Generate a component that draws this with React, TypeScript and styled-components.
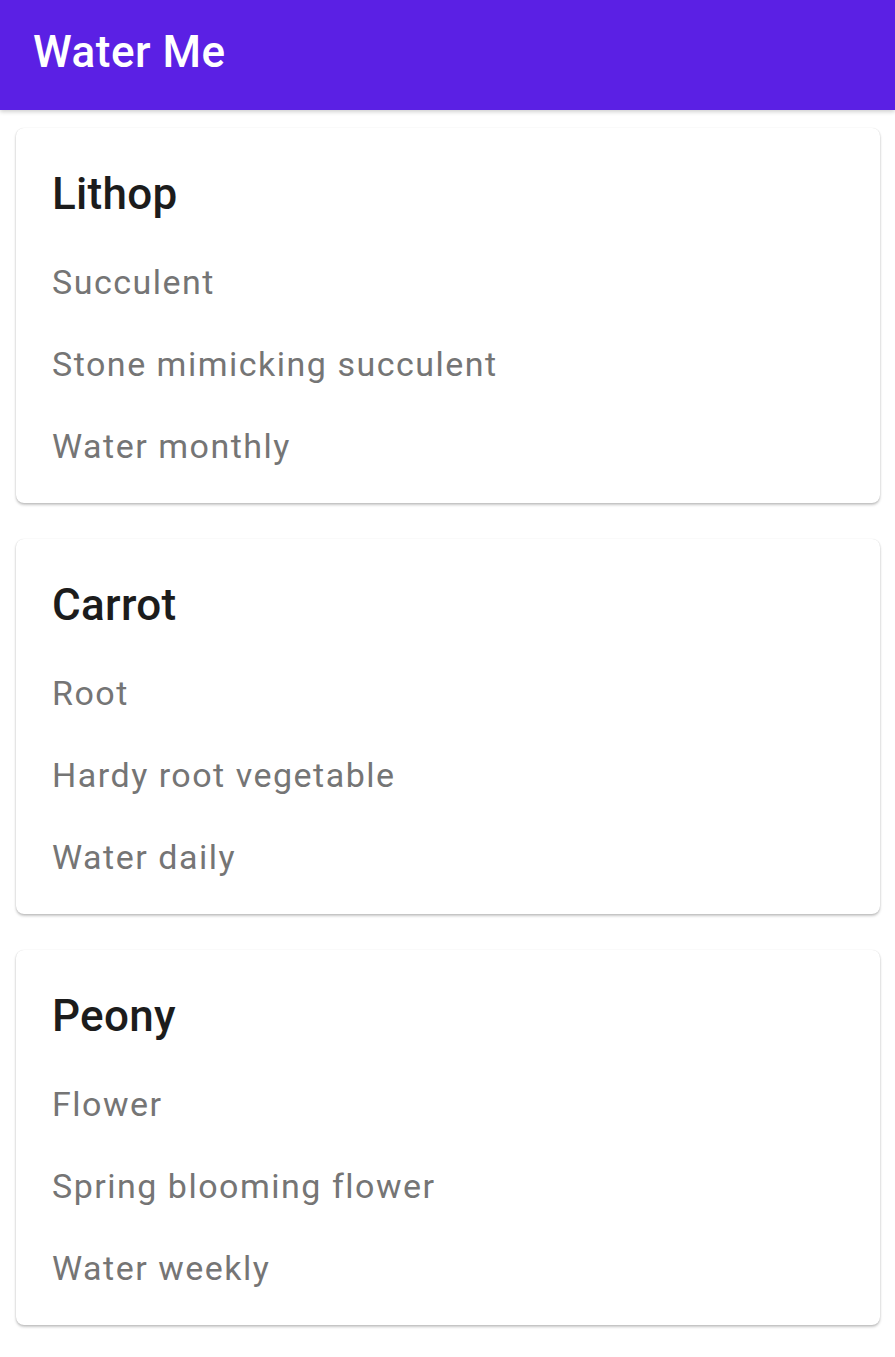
import React from "react";
import styled, { createGlobalStyle } from "styled-components";

const GlobalStyle = createGlobalStyle`
  html, body {
    margin: 0;
    padding: 0;
    background: #ffffff;
    font-family: Roboto, "Liberation Sans", sans-serif;
  }
`;

const Page = styled.div`
  display: flex;
  flex-direction: column;
  min-height: 1357px;
  background: #ffffff;
`;

const AppBar = styled.header`
  height: 110px;
  box-sizing: border-box;
  padding: 26px 33px 0;
  background: #5b20e4;
  box-shadow: 0 2px 4px rgba(0, 0, 0, 0.18);
  position: relative;
  z-index: 1;
`;

const AppTitle = styled.h1`
  margin: 0;
  font-size: 44px;
  line-height: 52px;
  font-weight: 500;
  color: #ffffff;
  letter-spacing: 0.5px;
`;

const List = styled.main`
  display: flex;
  flex-direction: column;
  gap: 36px;
  padding: 18px 15px 20px 16px;
`;

const Card = styled.section`
  display: flex;
  flex-direction: column;
  gap: 42px;
  box-sizing: border-box;
  height: 375px;
  padding: 40px 36px 37px;
  background: #ffffff;
  border-radius: 8px;
  box-shadow: 0 2px 3px rgba(0, 0, 0, 0.2), 0 1px 2px rgba(0, 0, 0, 0.08),
    0 0 1px rgba(0, 0, 0, 0.12);
`;

const CardTitle = styled.h2`
  margin: 0;
  font-size: 44px;
  line-height: 52px;
  font-weight: 500;
  color: #1c1c1c;
  letter-spacing: 0.3px;
`;

const CardLine = styled.p`
  margin: 0;
  font-size: 34px;
  line-height: 40px;
  font-weight: 400;
  color: #757575;
  letter-spacing: 1.5px;
`;

type Plant = { name: string; type: string; description: string; schedule: string };

const plants: Plant[] = [
  { name: "Lithop", type: "Succulent", description: "Stone mimicking succulent", schedule: "Water monthly" },
  { name: "Carrot", type: "Root", description: "Hardy root vegetable", schedule: "Water daily" },
  { name: "Peony", type: "Flower", description: "Spring blooming flower", schedule: "Water weekly" },
];

export default function App() {
  return (
    <>
      <GlobalStyle />
      <Page>
        <AppBar>
          <AppTitle>Water Me</AppTitle>
        </AppBar>
        <List>
          {plants.map((p) => (
            <Card key={p.name}>
              <CardTitle>{p.name}</CardTitle>
              <CardLine>{p.type}</CardLine>
              <CardLine>{p.description}</CardLine>
              <CardLine>{p.schedule}</CardLine>
            </Card>
          ))}
        </List>
      </Page>
    </>
  );
}
